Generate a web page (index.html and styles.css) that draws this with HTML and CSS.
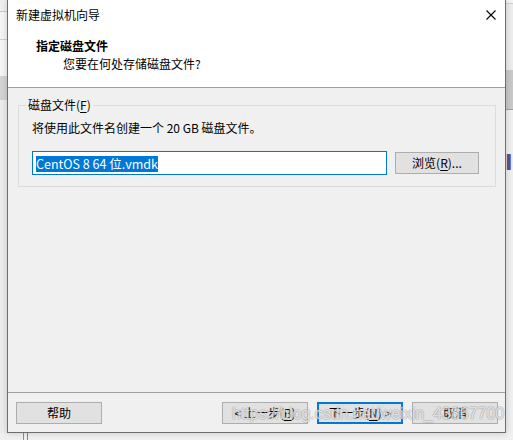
FILE: index.html
```html
<!DOCTYPE html>
<html lang="zh-CN">
<head>
<meta charset="utf-8">
<title>新建虚拟机向导</title>
<link rel="stylesheet" href="styles.css">
</head>
<body>
<div class="desk-left"></div>
<div class="desk-right"><span class="desk-glyph">l</span></div>
<div class="desk-bottom"></div>
<div class="window">
  <div class="header">
    <div class="titlebar">
      <span class="title">新建虚拟机向导</span>
      <svg class="close" width="10" height="10" viewBox="0 0 10 10"><path d="M0.5 0.5 L9.5 9.5 M9.5 0.5 L0.5 9.5" stroke="#000" stroke-width="1.1" fill="none"/></svg>
    </div>
    <div class="heading">指定磁盘文件</div>
    <div class="subheading">您要在何处存储磁盘文件?</div>
  </div>
  <div class="content">
    <fieldset class="group">
      <legend>磁盘文件(<u>F</u>)</legend>
      <div class="group-inner">
        <div class="desc">将使用此文件名创建一个 20 GB 磁盘文件。</div>
        <div class="file-row">
          <div class="input"><span class="sel">CentOS 8 64 位.vmdk</span></div>
          <div class="btn browse">浏览(<u>R</u>)...</div>
        </div>
      </div>
    </fieldset>
  </div>
  <div class="footer">
    <div class="btn">帮助</div>
    <div class="spacer"></div>
    <div class="btn">&lt; 上一步(<u>B</u>)</div>
    <div class="btn primary">下一步(<u>N</u>) &gt;</div>
    <div class="btn">取消</div>
  </div>
</div>
<div class="watermark">https://blog.csdn.net/weixin_43867700</div>
</body>
</html>
```
FILE: styles.css
```css
* { box-sizing: border-box; }
html, body { margin: 0; padding: 0; }
body {
  width: 513px;
  height: 440px;
  overflow: hidden;
  position: relative;
  background: #efefef;
  font-family: "Noto Sans CJK SC", "Noto Sans", sans-serif;
  font-size: 12px;
  color: #000;
}
.desk-left {
  position: absolute; left: 0; top: 0; width: 7px; height: 440px;
  background:
    linear-gradient(#efefef 0 11px, #c8c8c8 11px 12px, #f4f4f4 12px 39px, #cfcfcf 39px 40px, #f4f4f4 40px 76px, #d3d3d3 76px 100px, #ececec 100px 100%);
}
.desk-right {
  position: absolute; right: 0; top: 0; width: 8px; height: 440px;
  background:
    linear-gradient(#f3f3f3 0 3px, #cfcfcf 3px 4px, #ececec 4px 70px, #c8c8c8 70px 109px, #7aa9d6 109px 110px, #efefef 110px 100%);
  overflow: hidden;
}
.desk-glyph {
  position: absolute; left: 0; top: 150px;
  font-family: "DejaVu Sans", sans-serif; font-size: 22px; font-weight: bold; color: #5b4e9b; line-height: 26px;
}
.desk-bottom {
  position: absolute; left: 0; bottom: 0; width: 513px; height: 7px;
  background:
    linear-gradient(90deg, #f0f0f0 0 23px, #8a8f99 23px 24px, #f0f0f0 24px 27px, #6d8fb0 27px 28px, #f0f0f0 28px 100%);
}
.window {
  position: absolute;
  left: 7px;
  top: 0;
  width: 499px;
  height: 433px;
  border: 1px solid #6e6e6e;
  border-top: none;
  background: #f0f0f0;
  display: flex;
  flex-direction: column;
  box-shadow: 0 0 6px rgba(0,0,0,0.18);
}
.header {
  background: #fff;
  height: 88px;
  border-bottom: 1px solid #a0a0a0;
  flex: none;
}
.titlebar {
  height: 30px;
  display: flex;
  align-items: center;
  justify-content: space-between;
  padding: 0 9px 0 8px;
}
.title { line-height: 16px; }
.close { display: block; }
.heading {
  margin-top: 8px;
  padding-left: 28px;
  font-weight: bold;
  line-height: 16px;
}
.subheading {
  margin-top: 2px;
  padding-left: 55px;
  line-height: 16px;
}
.content {
  flex: 1;
  padding: 9px 9px 0 10px;
}
.group {
  margin: 0;
  padding: 0 0 11px 7px;
  border: 1px solid #dcdcdc;
  min-width: 0;
}
.group legend {
  padding: 0 2px;
  line-height: 16px;
}
.group-inner { padding-left: 6px; }
.desc {
  margin-top: 7px;
  line-height: 16px;
}
.file-row {
  margin-top: 15px;
  display: flex;
  align-items: center;
  gap: 8px;
}
.input {
  width: 355px;
  height: 24px;
  border: 1px solid #0078d7;
  background: #fff;
  padding: 2px 0 0 3px;
  display: flex;
  align-items: center;
}
.sel {
  background: #0078d7;
  color: #fff;
  font-size: 12.5px;
  line-height: 16px;
  height: 16px;
  white-space: nowrap;
}
.btn {
  width: 86px;
  height: 22px;
  background: #e1e1e1;
  border: 1px solid #adadad;
  display: flex;
  align-items: center;
  justify-content: center;
  line-height: 16px;
  white-space: nowrap;
}
.browse { width: 84px; }
.btn.primary { border: 2px solid #0078d7; }
u { text-decoration: underline; text-underline-offset: 2px; }
.footer {
  flex: none;
  height: 40px;
  border-top: 1px solid #a0a0a0;
  display: flex;
  align-items: flex-start;
  padding: 9px 7px 0 8px;
  gap: 9px;
}
.footer .spacer { flex: 1; }
.watermark {
  position: absolute;
  left: 232px;
  top: 404px;
  font-family: "Liberation Sans", sans-serif;
  font-size: 16px;
  line-height: 20px;
  color: rgba(255,255,255,0.6);
  text-shadow: 1px 0 0 rgba(150,150,150,0.35), -1px 0 0 rgba(150,150,150,0.35), 0 1px 0 rgba(150,150,150,0.35), 0 -1px 0 rgba(150,150,150,0.35);
  white-space: nowrap;
  letter-spacing: 0;
  pointer-events: none;
}
```
